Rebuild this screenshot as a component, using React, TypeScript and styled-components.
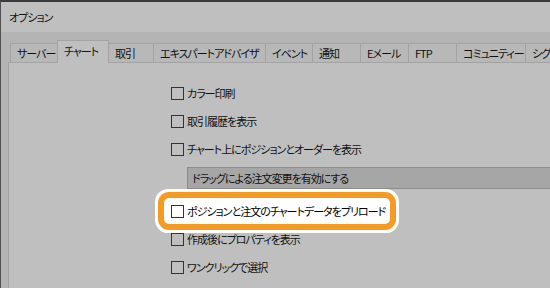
import React from 'react'
import styled, { createGlobalStyle, css } from 'styled-components'

const GlobalStyle = createGlobalStyle`
  html, body {
    margin: 0;
    padding: 0;
    background: #b4b4b4;
  }
  body {
    font-family: 'Noto Sans CJK JP', 'Noto Sans', sans-serif;
    font-size: 11px;
    letter-spacing: -1px;
    color: #111;
    font-feature-settings: 'palt' 1;
  }
`

const Window = styled.div`
  width: 550px;
  height: 288px;
  box-sizing: border-box;
  overflow: hidden;
  display: flex;
  flex-direction: column;
  background: #b4b4b4;
  border-top: 2px solid #3a3a3a;
  border-left: 1px solid #505050;
`
const TitleBar = styled.div`
  height: 30px;
  flex: none;
  display: flex;
  align-items: center;
  padding-left: 8px;
  background: #bfbfbf;
`
const TabStrip = styled.div`
  height: 30px;
  flex: none;
  display: flex;
  align-items: flex-end;
  padding-left: 10px;
`
const Tab = styled.div<{ $w: number; $active?: boolean }>`
  flex: none;
  box-sizing: border-box;
  width: ${({ $w }) => $w}px;
  height: 19px;
  margin-left: -1px;
  padding-left: 6px;
  display: flex;
  align-items: center;
  white-space: nowrap;
  overflow: hidden;
  background: #b8b8b8;
  border: 1px solid #a3a3a3;
  border-bottom: none;

  ${({ $active }) =>
    $active &&
    css`
      position: relative;
      z-index: 1;
      height: 23px;
      margin-bottom: -1px;
      padding-bottom: 3px;
      background: #bfbfbf;
    `}
`
const Pane = styled.div`
  flex: 1;
  margin-left: 7px;
  padding: 16px 0 0 162px;
  display: flex;
  flex-direction: column;
  align-items: flex-start;
  background: #bfbfbf;
  border-top: 1px solid #a3a3a3;
  border-left: 1px solid #a3a3a3;
`
const Row = styled.label<{ $highlight?: boolean; $gap?: number }>`
  height: 28px;
  flex: none;
  display: flex;
  align-items: center;
  gap: 3px;
  margin-top: ${({ $gap }) => $gap ?? 0}px;
  white-space: nowrap;

  ${({ $highlight }) =>
    $highlight &&
    css`
      position: relative;
      isolation: isolate;
      color: #000;

      &::before {
        content: '';
        position: absolute;
        left: -7px;
        right: -5px;
        top: 1px;
        bottom: 1px;
        z-index: -1;
        background: #fff;
        border-radius: 5px;
        box-shadow: 0 0 0 6px #f59b23, 0 0 0 9px #fff;
      }
    `}
`
const Box = styled.span<{ $light?: boolean }>`
  width: 13px;
  height: 13px;
  flex: none;
  box-sizing: border-box;
  border: 1px solid #333;
  background: ${({ $light }) => ($light ? '#fff' : 'transparent')};
`
const DisabledBar = styled.div`
  align-self: stretch;
  height: 22px;
  box-sizing: border-box;
  margin: 4px 0 0 16px;
  padding-left: 4px;
  display: flex;
  align-items: center;
  background: #a6a6a6;
  border-top: 1px solid #8c8c8c;
  border-bottom: 1px solid #8c8c8c;
  border-left: 1px solid #8c8c8c;
`

const tabs: { label: string; w: number; active?: boolean }[] = [
  { label: 'サーバー', w: 48 },
  { label: 'チャート', w: 52, active: true },
  { label: '取引', w: 46 },
  { label: 'エキスパートアドバイザ', w: 113 },
  { label: 'イベント', w: 48 },
  { label: '通知', w: 49 },
  { label: 'Eメール', w: 49 },
  { label: 'FTP', w: 49 },
  { label: 'コミュニティー', w: 70 },
  { label: 'シグナル', w: 60 },
]

const App = (): JSX.Element => (
  <>
    <GlobalStyle />
    <Window>
      <TitleBar>オプション</TitleBar>
      <TabStrip>
        {tabs.map((t) => (
          <Tab key={t.label} $w={t.w} $active={t.active}>
            {t.label}
          </Tab>
        ))}
      </TabStrip>
      <Pane>
        <Row>
          <Box />
          カラー印刷
        </Row>
        <Row>
          <Box />
          取引履歴を表示
        </Row>
        <Row>
          <Box />
          チャート上にポジションとオーダーを表示
        </Row>
        <DisabledBar>ドラッグによる注文変更を有効にする</DisabledBar>
        <Row $highlight $gap={8}>
          <Box $light />
          ポジションと注文のチャートデータをプリロード
        </Row>
        <Row>
          <Box />
          作成後にプロパティを表示
        </Row>
        <Row>
          <Box />
          ワンクリックで選択
        </Row>
      </Pane>
    </Window>
  </>
)

export default App
